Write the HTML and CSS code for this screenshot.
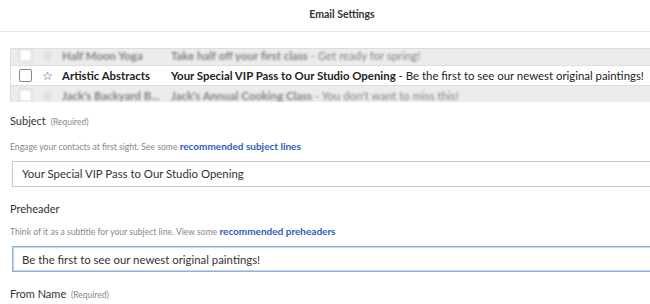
FILE: index.html
```html
<!DOCTYPE html>
<html lang="en">
<head>
    <meta charset="UTF-8">
    <meta name="viewport" content="width=device-width, initial-scale=1.0">
    <title>Email Settings</title>
    <link rel="stylesheet" href="styles.css">
</head>
<body>

<header class="topbar">
    <h1>Email Settings</h1>
</header>

<div class="page">
    <div class="inbox">
        <div class="inbox-inner">
            <div class="row muted">
                <span class="check"></span>
                <span class="star">☆</span>
                <span class="from">Half Moon Yoga</span>
                <span class="subj"><b>Take half off your first class</b> - Get ready for spring!</span>
            </div>
            <div class="row current">
                <span class="check"></span>
                <span class="star">☆</span>
                <span class="from">Artistic Abstracts</span>
                <span class="subj"><b>Your Special VIP Pass to Our Studio Opening</b> - Be the first to see our newest original paintings!</span>
            </div>
            <div class="row muted">
                <span class="check"></span>
                <span class="star">☆</span>
                <span class="from">Jack's Backyard B...</span>
                <span class="subj"><b>Jack's Annual Cooking Class</b> - You don't want to miss this!</span>
            </div>
        </div>
    </div>

    <div class="field first">
        <label class="label" for="subject">Subject <small>(Required)</small></label>
        <p class="hint">Engage your contacts at first sight. See some <a href="#">recommended subject lines</a></p>
        <input class="text" type="text" id="subject" value="Your Special VIP Pass to Our Studio Opening">
    </div>

    <div class="field">
        <label class="label" for="preheader">Preheader</label>
        <p class="hint">Think of it as a subtitle for your subject line. View some <a href="#">recommended preheaders</a></p>
        <input class="text focus" type="text" id="preheader" value="Be the first to see our newest original paintings!">
    </div>

    <div class="field">
        <label class="label" for="fromname">From Name <small>(Required)</small></label>
    </div>
</div>

</body>
</html>
```

FILE: styles.css
```css
body {
    margin: 0;
    font-family: Lato, "Open Sans", sans-serif;
    color: #333;
    background: #fff;
    overflow: hidden;
}
.topbar {
    box-sizing: border-box;
    height: 32px;
    padding: 0 0 3px 34px;
    border-bottom: 1px solid #e3e3e3;
    display: flex;
    align-items: center;
    justify-content: center;
}
h1 {
    margin: 0;
    font-size: 10.5px;
    font-weight: 700;
    color: #333;
}
.page {
    padding: 16px 0 0 10px;
    width: 700px;
}
.inbox {
    height: 53px;
    overflow: hidden;
    border-top: 1px solid #ddd;
    border-left: 1px solid #ddd;
    background: #ececec;
}
.inbox-inner {
    margin-top: -3px;
}
.row {
    height: 19px;
    display: flex;
    align-items: center;
    font-size: 11.4px;
    white-space: nowrap;
}
.row.current {
    background: #fff;
    border-top: 1px solid #ddd;
    border-bottom: 1px solid #ddd;
    color: #222;
}
.row.muted {
    color: #808080;
    filter: blur(1px);
}
.check {
    width: 11px;
    height: 11px;
    border: 1px solid #888;
    border-radius: 2px;
    background: #fff;
    margin-left: 8px;
}
.muted .check {
    border-color: #ccc;
}
.star {
    margin-left: 10px;
    width: 12px;
    font-family: "DejaVu Sans", sans-serif;
    font-size: 12px;
    color: #555;
}
.muted .star {
    color: #aaa;
}
.from {
    margin-left: 8px;
    width: 109px;
    font-weight: 700;
}
.subj b {
    font-weight: 700;
}
.field {
    padding-top: 15px;
}
.field.first {
    padding-top: 12px;
}
.label {
    display: block;
    font-size: 11px;
    line-height: 13px;
    color: #333;
}
.label small {
    font-size: 8.5px;
    color: #888;
    margin-left: 2px;
}
.hint {
    margin: 11.5px 0 8px;
    font-size: 8.6px;
    line-height: 11px;
    color: #888;
}
.hint a {
    color: #2f5bbf;
    font-size: 10px;
    font-weight: 700;
    text-decoration: none;
}
.text {
    display: block;
    box-sizing: border-box;
    width: 700px;
    height: 26px;
    margin-left: 2px;
    padding: 0 9px;
    border: 1px solid #c8c8c8;
    border-radius: 0;
    font-family: inherit;
    font-size: 11.4px;
    color: #333;
    background: #fff;
}
.text.focus {
    border-color: #8fb0e0;
    box-shadow: inset 0 0 0 1px #c3d4ee;
}
```
